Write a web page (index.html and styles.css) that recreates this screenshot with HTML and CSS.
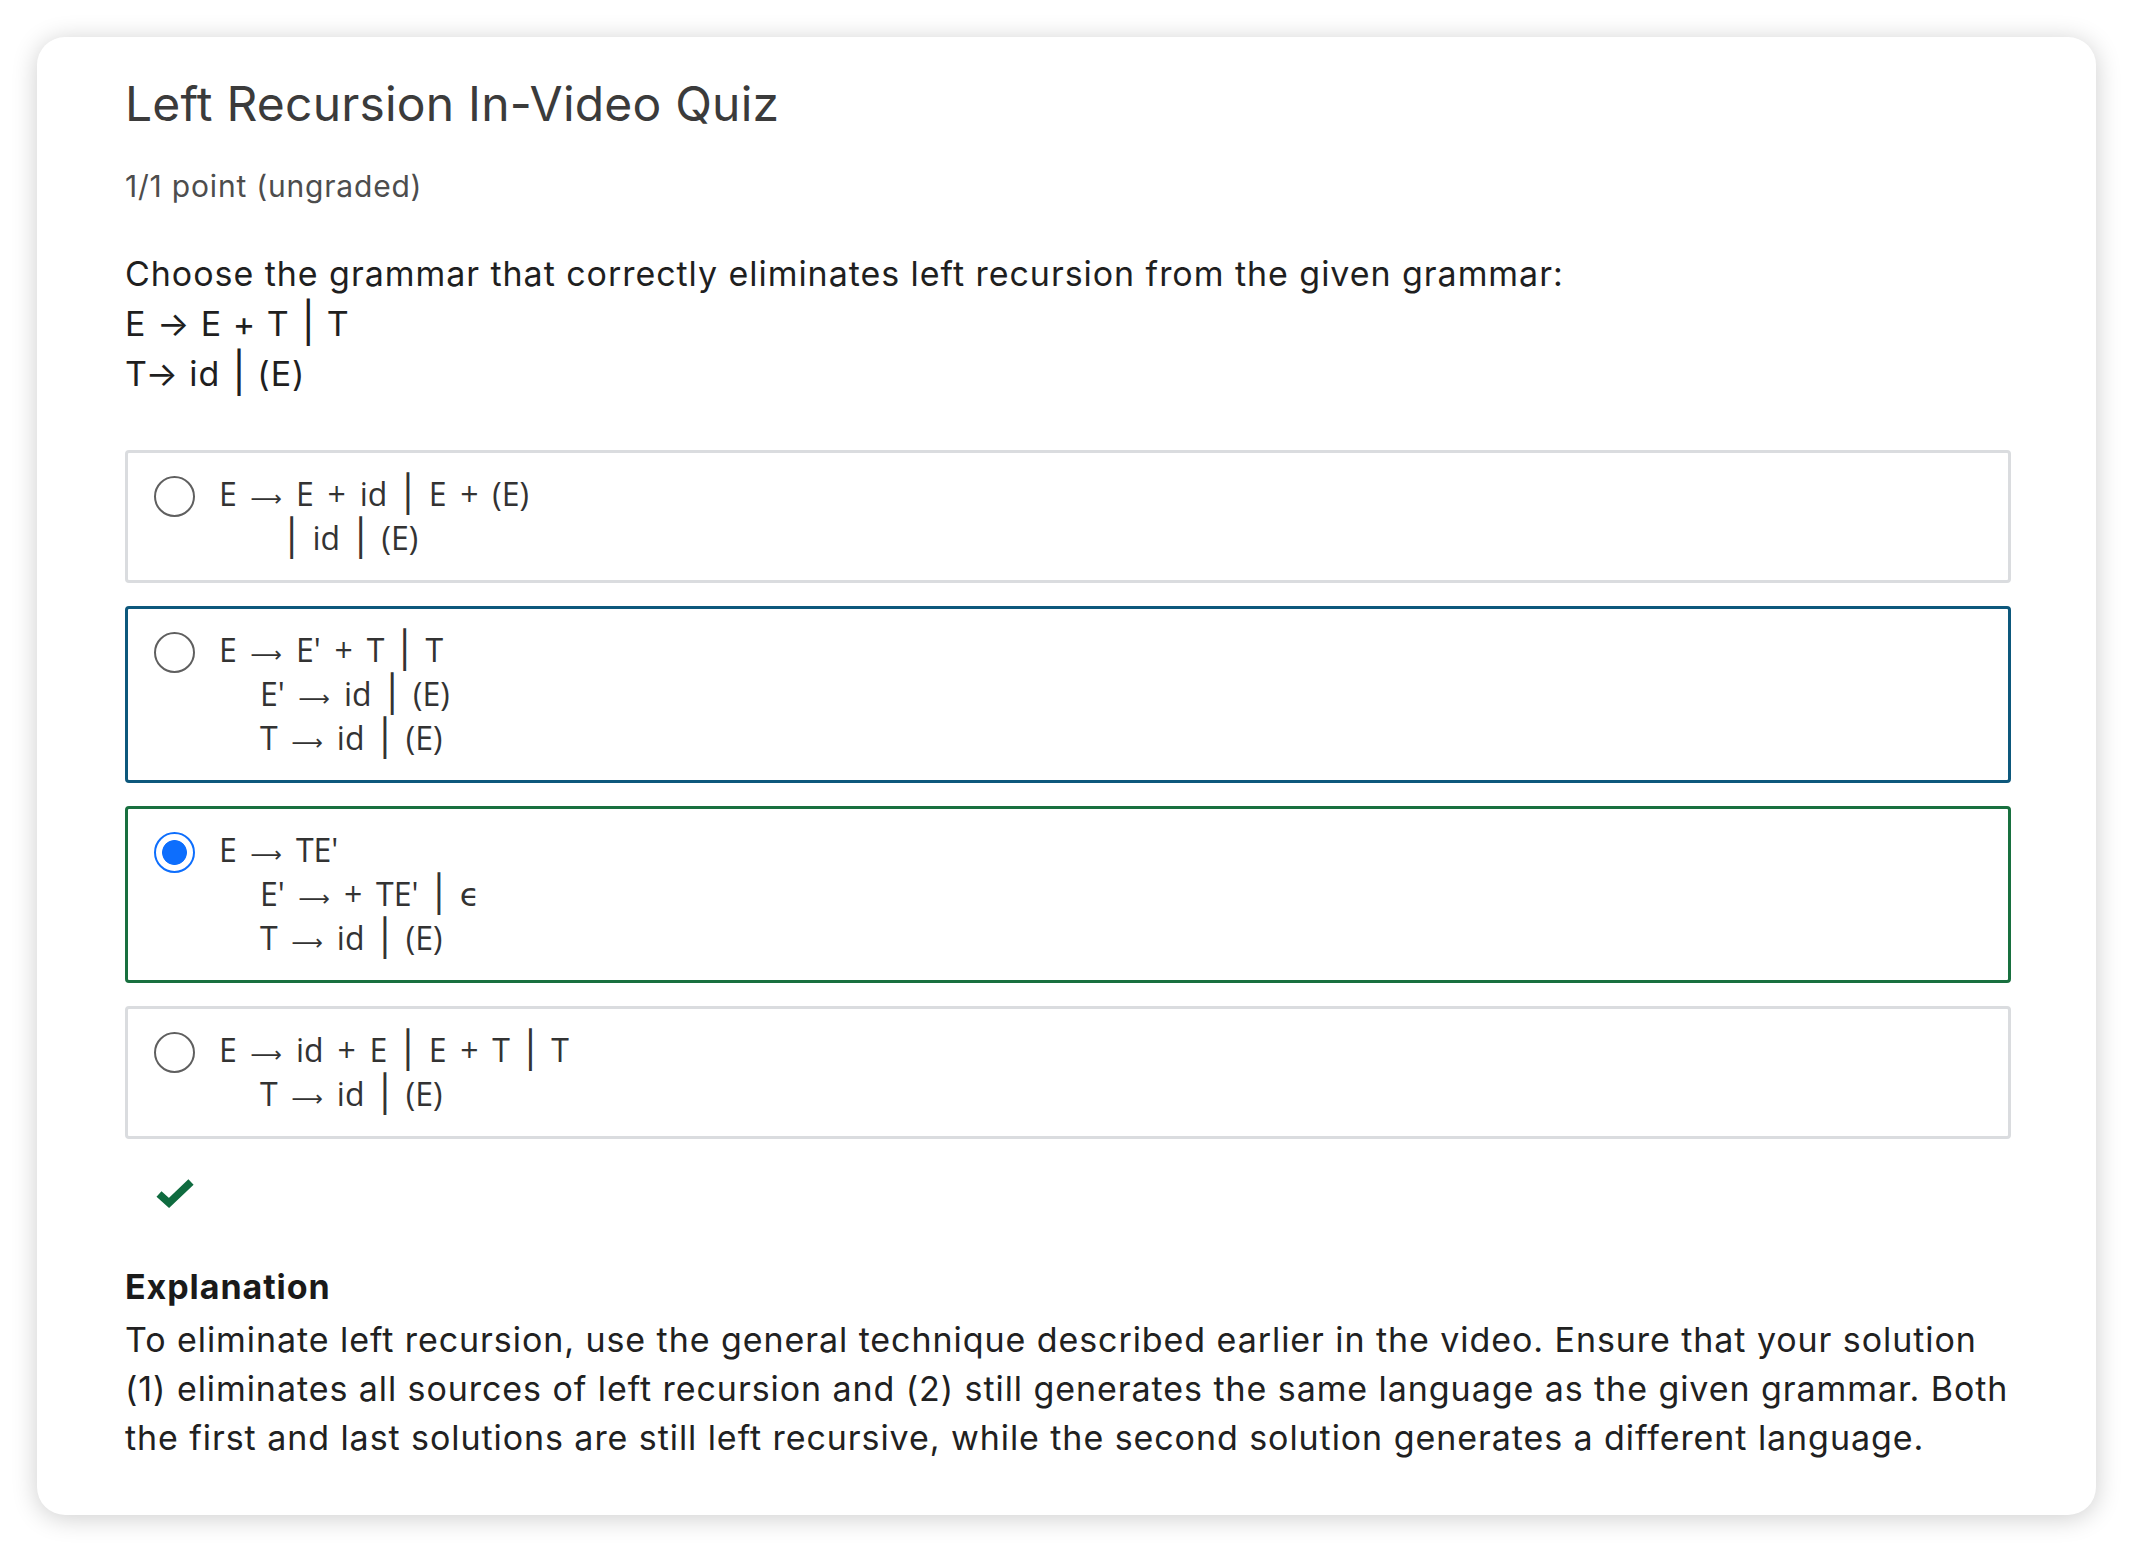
FILE: index.html
```html
<!DOCTYPE html>
<html lang="en">
<head>
<meta charset="utf-8">
<title>Left Recursion In-Video Quiz</title>
<link rel="stylesheet" href="styles.css">
</head>
<body>
<div class="card">
  <h2 class="title">Left Recursion In-Video Quiz</h2>
  <div class="points">1/1 point (ungraded)</div>
  <div class="question">
    <div class="qline">Choose the grammar that correctly eliminates left recursion from the given grammar:</div>
    <div class="qline">E → E + T <span class="qbar">│</span> T</div>
    <div class="qline">T→ id <span class="qbar">│</span> (E)</div>
  </div>

  <div class="options">
    <div class="option">
      <span class="radio"></span>
      <div class="math">
        <div class="mline">E <span class="arr">⟶</span> E + id <span class="bar">│</span> E + (E)</div>
        <div class="mline cont"><span class="bar">│</span> id <span class="bar">│</span> (E)</div>
      </div>
    </div>
    <div class="option focus">
      <span class="radio"></span>
      <div class="math">
        <div class="mline">E <span class="arr">⟶</span> E' + T <span class="bar">│</span> T</div>
        <div class="mline sub">E' <span class="arr">⟶</span> id <span class="bar">│</span> (E)</div>
        <div class="mline sub">T <span class="arr">⟶</span> id <span class="bar">│</span> (E)</div>
      </div>
    </div>
    <div class="option correct">
      <span class="radio selected"></span>
      <div class="math">
        <div class="mline">E <span class="arr">⟶</span> TE'</div>
        <div class="mline sub">E' <span class="arr">⟶</span> + TE' <span class="bar">│</span> <span class="eps">ϵ</span></div>
        <div class="mline sub">T <span class="arr">⟶</span> id <span class="bar">│</span> (E)</div>
      </div>
    </div>
    <div class="option">
      <span class="radio"></span>
      <div class="math">
        <div class="mline">E <span class="arr">⟶</span> id + E <span class="bar">│</span> E + T <span class="bar">│</span> T</div>
        <div class="mline sub">T <span class="arr">⟶</span> id <span class="bar">│</span> (E)</div>
      </div>
    </div>
  </div>

  <div class="status">
    <svg class="check" width="40" height="32" viewBox="0 0 40 32" aria-hidden="true">
      <path d="M3 17 L13 26 L35 5" fill="none" stroke="#0f6b3f" stroke-width="7.5" stroke-linejoin="miter"/>
    </svg>
  </div>

  <div class="explanation">
    <h3 class="exp-title">Explanation</h3>
    <p class="exp-text">To eliminate left recursion, use the general technique described earlier in the video. Ensure that your solution (1) eliminates all sources of left recursion and (2) still generates the same language as the given grammar. Both the first and last solutions are still left recursive, while the second solution generates a different language.</p>
  </div>
</div>
</body>
</html>
```

FILE: styles.css
```css
* { box-sizing: border-box; }

html, body {
  margin: 0;
  padding: 0;
  background: #ffffff;
}

body {
  font-family: Inter, "Liberation Sans", sans-serif;
  color: #212121;
}

.card {
  margin: 37px 36px 36px 37px;
  background: #ffffff;
  border-radius: 28px;
  box-shadow: 0 3px 26px rgba(0, 0, 0, 0.2);
  padding: 38px 80px 53px 88px;
}

.title {
  margin: 0;
  font-size: 48px;
  line-height: 58px;
  font-weight: 400;
  letter-spacing: 0.2px;
  color: #3b3b3b;
}

.points {
  margin-top: 33px;
  font-size: 30px;
  line-height: 40px;
  letter-spacing: 0.8px;
  color: #4d4d4d;
}

.question {
  margin-top: 43px;
  font-size: 34px;
  line-height: 50px;
  letter-spacing: 0.95px;
  color: #1f1f1f;
}

.qline {
  white-space: pre;
}

.qbar {
  font-family: "DejaVu Sans", sans-serif;
  font-size: 40px;
  line-height: 0;
  letter-spacing: 0;
  margin: 0 -4px;
}

.options {
  margin-top: 51px;
  margin-right: 5px;
  display: flex;
  flex-direction: column;
  gap: 23px;
}

.option {
  display: flex;
  align-items: flex-start;
  gap: 24px;
  border: 3px solid #dadcdf;
  border-radius: 4px;
  padding: 19px 20px 20px 26px;
}

.option.focus {
  border-color: #0d587c;
}

.option.correct {
  border-color: #18703f;
}

.radio {
  flex: none;
  width: 41px;
  height: 41px;
  margin-top: 4px;
  border: 2px solid #5f5f5f;
  border-radius: 50%;
  background: #fff;
}

.radio.selected {
  border: 2.5px solid #0d6efd;
  background: radial-gradient(circle, #0d6efd 0 12px, #ffffff 12.8px);
}

.math {
  font-family: "Open Sans", "Noto Sans", sans-serif;
  font-size: 32px;
  line-height: 44px;
  color: #333333;
  word-spacing: 5.5px;
}

.mline {
  white-space: pre;
  height: 44px;
}

.mline.sub {
  padding-left: 41px;
}

.mline.cont {
  padding-left: 66px;
}

.arr {
  font-family: "DejaVu Sans", sans-serif;
  font-size: 22px;
  line-height: 0;
}

.bar {
  font-family: "DejaVu Sans", sans-serif;
  font-size: 36px;
  line-height: 0;
  margin: 0 -4px;
}

.eps {
  font-family: "DejaVu Sans", sans-serif;
  font-size: 32px;
}

.status {
  margin-top: 38px;
  padding-left: 31px;
  height: 32px;
}

.check {
  display: block;
}

.explanation {
  margin-top: 53px;
}

.exp-title {
  margin: 0;
  font-size: 34px;
  line-height: 50px;
  font-weight: 700;
  letter-spacing: 0.93px;
  color: #1a1a1a;
}

.exp-text {
  margin: 3px 0 0 0;
  font-size: 34px;
  line-height: 49px;
  letter-spacing: 0.93px;
  color: #212121;
}
```
